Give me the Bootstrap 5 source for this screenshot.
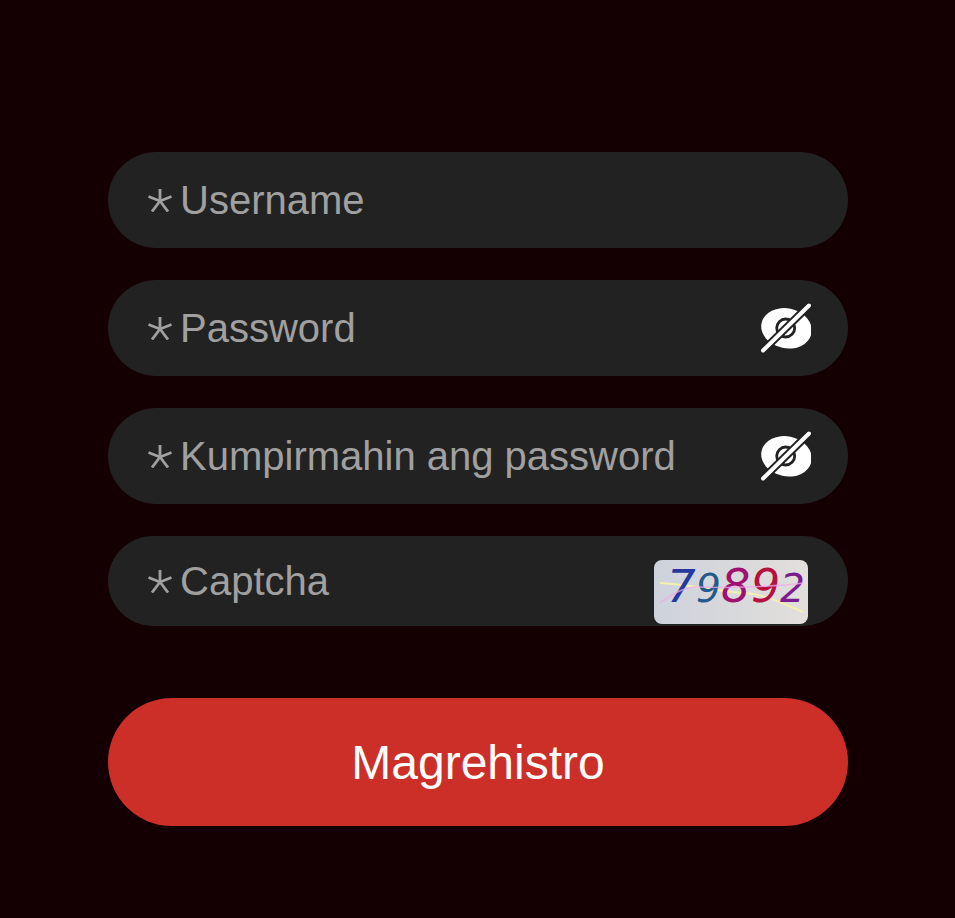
<!doctype html>
<html lang="tl">
<head>
<meta charset="utf-8">
<title>Magrehistro</title>
<link href="https://cdn.jsdelivr.net/npm/bootstrap@5.3.0/dist/css/bootstrap.min.css" rel="stylesheet">
<style>
html,body{height:100%;}
body{background:#140002;font-family:"Liberation Sans",Arial,sans-serif;}
.reg-form{padding:152px 107px 0 108px;gap:32px;}
.reg-field{height:96px;background:#222;border-radius:48px;padding:0 37px 0 40px;color:#a0a0a0;font-size:40px;line-height:48px;}
.reg-field.short{height:90px;padding-right:40px;}
.reg-field label{margin:0 0 0 8px;white-space:nowrap;}
.reg-star{width:24px;height:24px;flex:none;}
.reg-eye{width:50px;height:50px;flex:none;display:block;}
.reg-cap{width:154px;height:64px;flex:none;display:block;border-radius:8px;align-self:flex-start;margin-top:24px;}
.reg-btn{height:128px;margin-top:40px;padding-top:8px;border-radius:64px;background:#cb2f28;border:0;color:#fff;font-size:48px;line-height:56px;width:100%;}
.reg-btn:hover{background:#cb2f28;color:#fff;}
.cap-d{font-family:"DejaVu Sans",sans-serif;font-style:italic;}
</style>
</head>
<body>
<form class="reg-form d-flex flex-column">
  <div class="reg-field d-flex align-items-center">
    <svg class="reg-star" viewBox="0 0 24 24" fill="none" stroke="#a0a0a0" stroke-width="2.800"><path d="M12 1v12M.5 8.500L12 13l11.500-4.500M4 23.500L12 13l8 10.500"/></svg>
    <label>Username</label>
  </div>
  <div class="reg-field d-flex align-items-center">
    <svg class="reg-star" viewBox="0 0 24 24" fill="none" stroke="#a0a0a0" stroke-width="2.800"><path d="M12 1v12M.5 8.500L12 13l11.500-4.500M4 23.500L12 13l8 10.500"/></svg>
    <label>Password</label>
    <svg class="reg-eye ms-auto" viewBox="0 0 50 50"><ellipse cx="25.500" cy="25.300" rx="25.500" ry="20" transform="rotate(12 25.500 25.300)" fill="#fff"/><circle cx="24.700" cy="25" r="9" fill="#fff" stroke="#222" stroke-width="2.800"/><path d="M2 47.500L48 2.500" stroke="#222" stroke-width="8"/><path d="M2 47.500L48 2.500" stroke="#fff" stroke-width="4" stroke-linecap="round"/></svg>
  </div>
  <div class="reg-field d-flex align-items-center">
    <svg class="reg-star" viewBox="0 0 24 24" fill="none" stroke="#a0a0a0" stroke-width="2.800"><path d="M12 1v12M.5 8.500L12 13l11.500-4.500M4 23.500L12 13l8 10.500"/></svg>
    <label>Kumpirmahin ang password</label>
    <svg class="reg-eye ms-auto" viewBox="0 0 50 50"><ellipse cx="25.500" cy="25.300" rx="25.500" ry="20" transform="rotate(12 25.500 25.300)" fill="#fff"/><circle cx="24.700" cy="25" r="9" fill="#fff" stroke="#222" stroke-width="2.800"/><path d="M2 47.500L48 2.500" stroke="#222" stroke-width="8"/><path d="M2 47.500L48 2.500" stroke="#fff" stroke-width="4" stroke-linecap="round"/></svg>
  </div>
  <div class="reg-field short d-flex align-items-center">
    <svg class="reg-star" viewBox="0 0 24 24" fill="none" stroke="#a0a0a0" stroke-width="2.800"><path d="M12 1v12M.5 8.500L12 13l11.500-4.500M4 23.500L12 13l8 10.500"/></svg>
    <label>Captcha</label>
    <svg class="reg-cap ms-auto" viewBox="0 0 154 64">
      <defs><linearGradient id="capbg" x1="0" y1="0" x2="1" y2="0"><stop offset="0" stop-color="#cdd2dc"/><stop offset="1" stop-color="#e2dfdb"/></linearGradient></defs>
      <rect width="154" height="64" fill="url(#capbg)"/>
      <path d="M6 23C40 25 69 32 90 33S130 44 149 52" fill="none" stroke="#f4f1ae" stroke-width="2"/>
      <text class="cap-d" y="42"><tspan x="13" font-size="45" fill="#27379f">7</tspan><tspan x="42" font-size="39" fill="#235a8a">9</tspan><tspan x="67" font-size="46" fill="#a01070">8</tspan><tspan x="97" font-size="46" fill="#b5103e">9</tspan><tspan x="126" font-size="39" fill="#7d1a90">2</tspan></text>
      <path d="M6 43C20 33 30 27 44 27S70 28 90 27 130 26 149 23" fill="none" stroke="#f0a8ec" stroke-width="1.500" opacity=".75"/>
    </svg>
  </div>
  <button type="button" class="btn reg-btn">Magrehistro</button>
</form>
<script src="https://cdn.jsdelivr.net/npm/bootstrap@5.3.0/dist/js/bootstrap.bundle.min.js"></script>
</body>
</html>
